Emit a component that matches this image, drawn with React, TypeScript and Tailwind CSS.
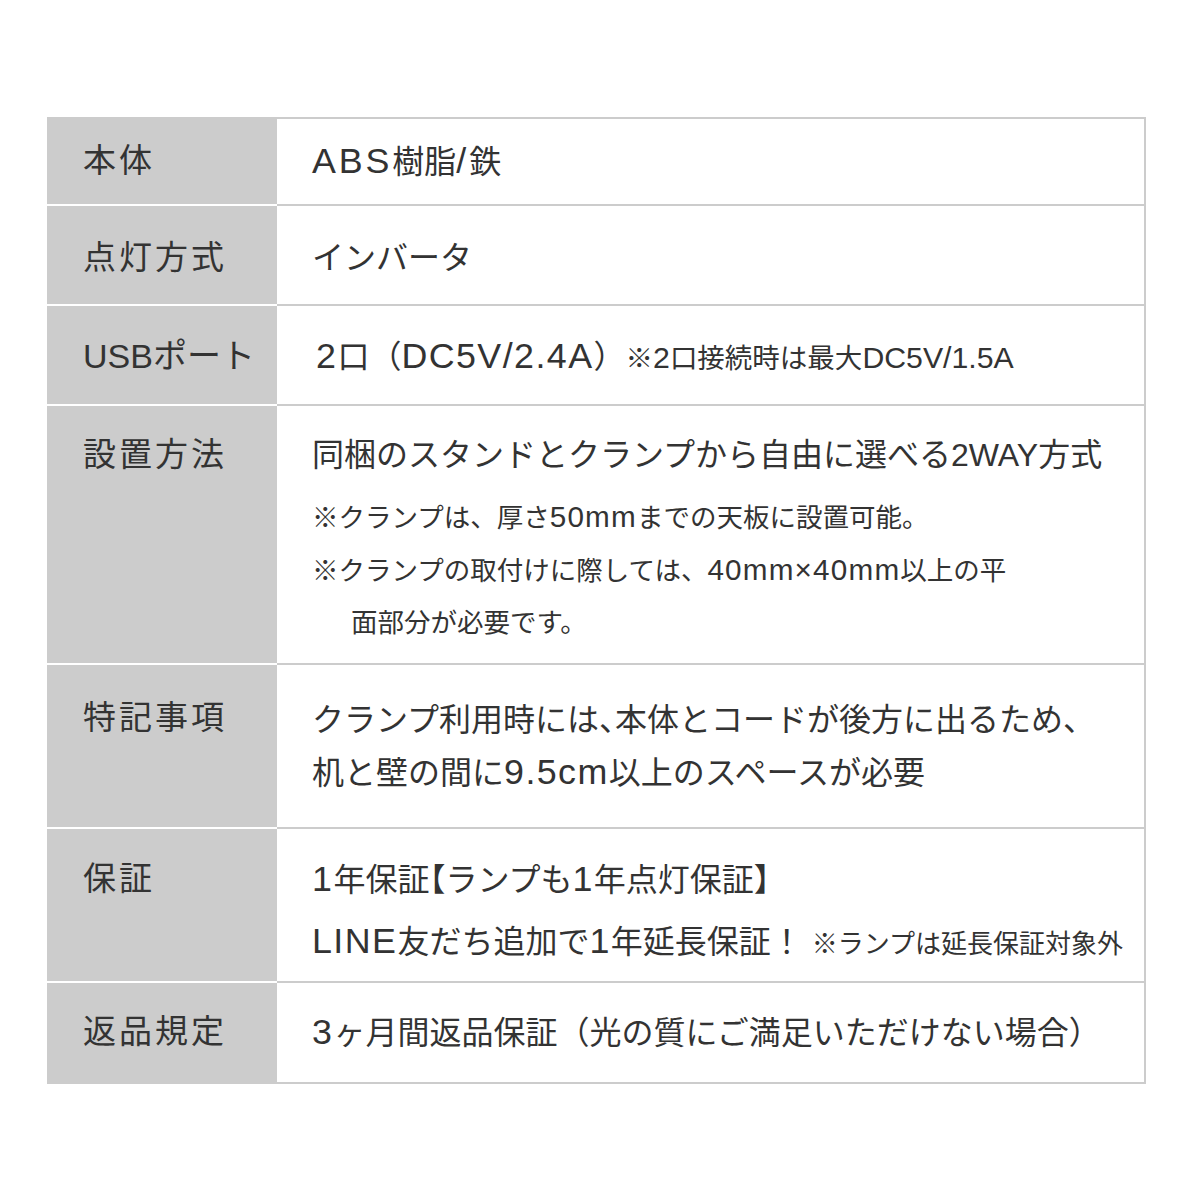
import React from "react";

// Latin runs in the reference render larger/wider than the kana around them.
function T({ s, halt = false, latin = "text-[1.12em] tracking-[0.04em]" }: { s: string; halt?: boolean; latin?: string }) {
    const parts = s.split(/([A-Za-z0-9./×]+|[【】])/).filter((p) => p !== "");
    return (
        <>
            {parts.map((p, i) => {
                if (/^[A-Za-z0-9./×]+$/.test(p)) {
                    return (
                        <span key={i} className={latin}>
                            {p}
                        </span>
                    );
                }
                if (halt && /^[【】]$/.test(p)) {
                    return (
                        <span key={i} className="[font-feature-settings:'halt']">
                            {p}
                        </span>
                    );
                }
                return <React.Fragment key={i}>{p}</React.Fragment>;
            })}
        </>
    );
}

type RowProps = {
    label: string;
    labelClass?: string;
    rowClass: string;
    padClass: string;
    last?: boolean;
    children: React.ReactNode;
};

function SpecRow({ label, labelClass = "text-[33px] tracking-[3px]", rowClass, padClass, last, children }: RowProps) {
    return (
        <div className={`flex ${rowClass}`}>
            <div
                className={`w-[230px] shrink-0 bg-[#cccccc] pl-[36px] ${padClass} ${
                    last ? "border-b-2 border-[#cccccc]" : "border-b-2 border-white"
                }`}
            >
                <p className={`leading-[48px] whitespace-nowrap ${labelClass}`}>{label}</p>
            </div>
            <div className={`flex-1 bg-white pl-[35px] border-b-2 border-r-2 border-[#cccccc] ${padClass}`}>
                {children}
            </div>
        </div>
    );
}

export default function App() {
    return (
        <div
            className="min-h-[1200px] bg-white pt-[117px] pl-[47px] text-[#333333]"
            style={{ fontFamily: '"Liberation Sans", "Noto Sans CJK JP", sans-serif' }}
        >
            <div className="w-[1099px] border-t-2 border-[#cccccc]">
                <SpecRow label="本体" rowClass="h-[87px]" padClass="pt-[18px]">
                    <p className="text-[32px] leading-[48px]">
                        <T s="ABS樹脂/鉄" latin="text-[1.12em] tracking-[0.08em]" />
                    </p>
                </SpecRow>

                <SpecRow label="点灯方式" rowClass="h-[100px]" padClass="pt-[28px]">
                    <p className="text-[32px] leading-[48px]">インバータ</p>
                </SpecRow>

                <SpecRow label="USBポート" labelClass="text-[34px]" rowClass="h-[100px]" padClass="pt-[26px]">
                    <p className="text-[32px] leading-[48px] pl-[4px] whitespace-nowrap">
                        <T s="2口（DC5V/2.4A）" />
                        <span className="text-[27.5px]">
                            <T s="※2口接続時は最大DC5V/1.5A" latin="text-[1.1em]" />
                        </span>
                    </p>
                </SpecRow>

                <SpecRow label="設置方法" rowClass="h-[259px]" padClass="pt-[25px]">
                    <p className="text-[32px] leading-[48px]">
                        <T s="同梱のスタンドとクランプから自由に選べる2WAY方式" latin="" />
                    </p>
                    <div className="mt-[12px] text-[26.5px] leading-[52px]">
                        <p>
                            <T s="※クランプは、厚さ50mmまでの天板に設置可能。" />
                        </p>
                        <p>
                            <T s="※クランプの取付けに際しては、40mm×40mm以上の平" />
                        </p>
                        <p className="pl-[39px]">面部分が必要です。</p>
                    </div>
                </SpecRow>

                <SpecRow label="特記事項" rowClass="h-[164px]" padClass="pt-[29px]">
                    <div className="text-[32px] leading-[52px]">
                        <p>
                            クランプ利用時には<span className="[font-feature-settings:'halt']">、</span>
                            本体とコードが後方に出るため、
                        </p>
                        <p>
                            <T s="机と壁の間に9.5cm以上のスペースが必要" />
                        </p>
                    </div>
                </SpecRow>

                <SpecRow label="保証" rowClass="h-[154px]" padClass="pt-[26px]">
                    <p className="text-[32px] leading-[48px]">
                        <T s="1年保証【ランプも1年点灯保証】" halt />
                    </p>
                    <p className="mt-[13px] text-[32px] leading-[48px] whitespace-nowrap">
                        <T s="LINE友だち追加で1年延長保証！" />{" "}
                        <span className="text-[26px]">※ランプは延長保証対象外</span>
                    </p>
                </SpecRow>

                <SpecRow label="返品規定" rowClass="h-[101px]" padClass="pt-[25px]" last>
                    <p className="text-[32px] leading-[48px]">
                        <T s="3ヶ月間返品保証（光の質にご満足いただけない場合）" />
                    </p>
                </SpecRow>
            </div>
        </div>
    );
}
